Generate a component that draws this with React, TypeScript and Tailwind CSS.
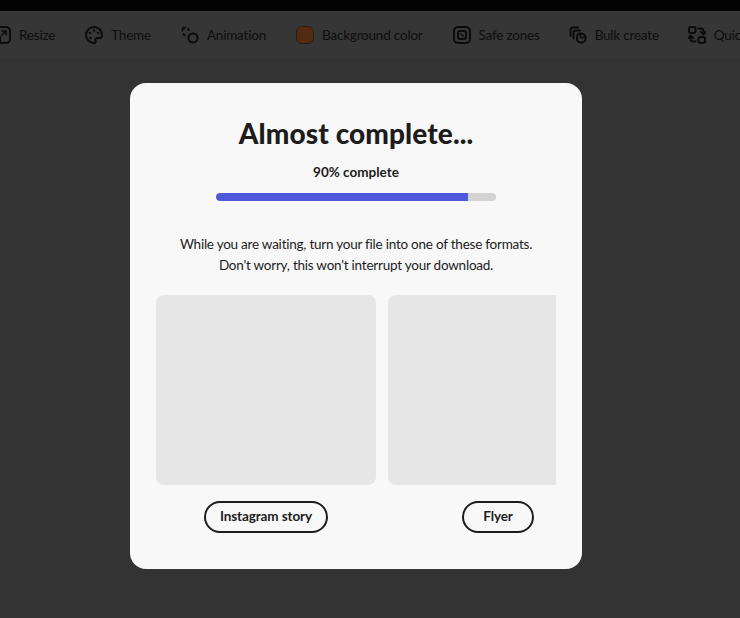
import { ReactNode } from 'react';

const font = { fontFamily: 'Lato, "Noto Sans", sans-serif' };

function ToolItem({ icon, label, className }: { icon: ReactNode; label: string; className: string }) {
  return (
    <div className={`flex items-center shrink-0 gap-[8px] ${className}`}>
      {icon}
      <span className="pt-[1px] text-[13.5px] tracking-[-0.2px] leading-none text-[#0d0d0d] whitespace-nowrap">{label}</span>
    </div>
  );
}

function Icon({ children }: { children: ReactNode }) {
  return (
    <svg width="18" height="18" viewBox="0 0 18 18" fill="none" stroke="#0b0b0b" strokeWidth="2" strokeLinecap="round" strokeLinejoin="round" className="shrink-0">
      {children}
    </svg>
  );
}

export default function App() {
  return (
    <div className="h-[618px] w-[740px] overflow-hidden bg-[#333333] flex flex-col" style={font}>
      {/* Top bars, dimmed behind the dialog */}
      <div className="h-[11px] bg-[#030303] shrink-0" />
      <div className="h-[48px] bg-[#363636] shrink-0 flex items-center -ml-[7px]">
        <ToolItem
          className="mr-[30px]"
          label="Resize"
          icon={
            <Icon>
              <rect x="1" y="1" width="16" height="16" rx="4" />
              <path d="M9 5h4v4M13 5l-4 4" strokeWidth="1.500" />
              <path d="M1 10h5a1 1 0 0 1 1 1v6" />
            </Icon>
          }
        />
        <ToolItem
          className="mr-[30px]"
          label="Theme"
          icon={
            <Icon>
              <path d="M9 1a8 8 0 1 0 0 16c1.800 0 2.200-1.200 1.600-2.300-.7-1.400.2-2.700 1.800-2.700H15c1.400 0 2-1 2-3 0-4.500-3.500-8-8-8z" />
              <circle cx="5" cy="7" r="1.200" fill="#0b0b0b" stroke="none" />
              <circle cx="9" cy="4.500" r="1.200" fill="#0b0b0b" stroke="none" />
              <circle cx="13" cy="7" r="1.200" fill="#0b0b0b" stroke="none" />
              <circle cx="5.500" cy="12" r="1.200" fill="#0b0b0b" stroke="none" />
            </Icon>
          }
        />
        <ToolItem
          className="mr-[30px]"
          label="Animation"
          icon={
            <Icon>
              <circle cx="12" cy="12" r="4.500" />
              <path d="M1.500 4.500V3.500a2 2 0 0 1 2-2h.5" />
              <path d="M2.500 8l1 1.200M7 3l1 1" />
            </Icon>
          }
        />
        <ToolItem
          className="mr-[30px]"
          label="Background color"
          icon={
            <span className="h-[18px] w-[18px] shrink-0 rounded-[6px] bg-[#532b12] border-[1.500px] border-[#2c1c12]" />
          }
        />
        <ToolItem
          className="mr-[29px]"
          label="Safe zones"
          icon={
            <Icon>
              <rect x="1" y="1" width="16" height="16" rx="4" />
              <rect x="5" y="5" width="8" height="8" rx="2" />
              <path d="M8 8l2 2" strokeWidth="1.500" />
            </Icon>
          }
        />
        <ToolItem
          className="mr-[29px]"
          label="Bulk create"
          icon={
            <Icon>
              <path d="M1.500 10V3.500a2 2 0 0 1 2-2H9" />
              <path d="M4.500 12.500V6.500a2 2 0 0 1 2-2H11" />
              <path d="M11.500 7.500h.5a4.500 4.500 0 0 1 4.500 4.500v.5a4 4 0 0 1-4 4h-1a3.500 3.500 0 0 1-3.500-3.500V11a3.500 3.500 0 0 1 3.500-3.500z" />
              <path d="M11.500 8v3.500H16" strokeWidth="1.500" />
            </Icon>
          }
        />
        <ToolItem
          label="Quick actions"
          icon={
            <Icon>
              <rect x="1" y="1" width="6.500" height="6" rx="2" />
              <rect x="10.500" y="11" width="6.500" height="6" rx="2" />
              <path d="M10.500 2.500H13a2.500 2.500 0 0 1 2.500 2.500v3M13 6l2.500 2.500L17.500 6" />
              <path d="M7.500 15.500H5A2.500 2.500 0 0 1 2.500 13v-3M.5 12l2-2.500L5 12" />
            </Icon>
          }
        />
      </div>

      {/* Download progress dialog */}
      <div className="ml-[130px] mt-[24px] h-[486px] w-[452px] rounded-[16px] bg-[#f8f8f8] pt-[34px] px-[26px] flex flex-col items-center text-[#1c1c1c]">
        <h1 className="text-[28px] tracking-[0.1px] leading-[32px] font-black">Almost complete...</h1>
        <p className="mt-[14px] text-[13.5px] leading-[18px] font-bold">90% complete</p>
        <div className="mt-[12px] h-[8px] w-[280px] rounded-full bg-[#d3d3d3] overflow-hidden">
          <div className="h-full bg-[#4f57dc] rounded-l-full" style={{ width: '90%' }} />
        </div>
        <p className="mt-[33px] text-center text-[13.5px] tracking-[-0.23px] leading-[21px] text-[#1c1c1c]">
          While you are waiting, turn your file into one of these formats.
          <br />
          Don't worry, this won't interrupt your download.
        </p>

        <div className="mt-[19px] w-[400px] overflow-hidden flex gap-[12px]">
          <div className="w-[220px] shrink-0 flex flex-col items-center">
            <div className="h-[190px] w-full rounded-[8px] bg-[#e6e6e6]" />
            <span className="mt-[16px] h-[32px] w-[124px] pb-[2px] justify-center rounded-full border-2 border-[#1c1c1c] flex items-center text-[13.5px] tracking-[-0.1px] font-bold whitespace-nowrap">
              Instagram story
            </span>
          </div>
          <div className="w-[220px] shrink-0 flex flex-col items-center">
            <div className="h-[190px] w-full rounded-[8px] bg-[#e6e6e6]" />
            <span className="mt-[16px] h-[32px] w-[72px] pb-[2px] justify-center rounded-full border-2 border-[#1c1c1c] flex items-center text-[13.5px] tracking-[-0.1px] font-bold whitespace-nowrap">
              Flyer
            </span>
          </div>
        </div>
      </div>
    </div>
  );
}
